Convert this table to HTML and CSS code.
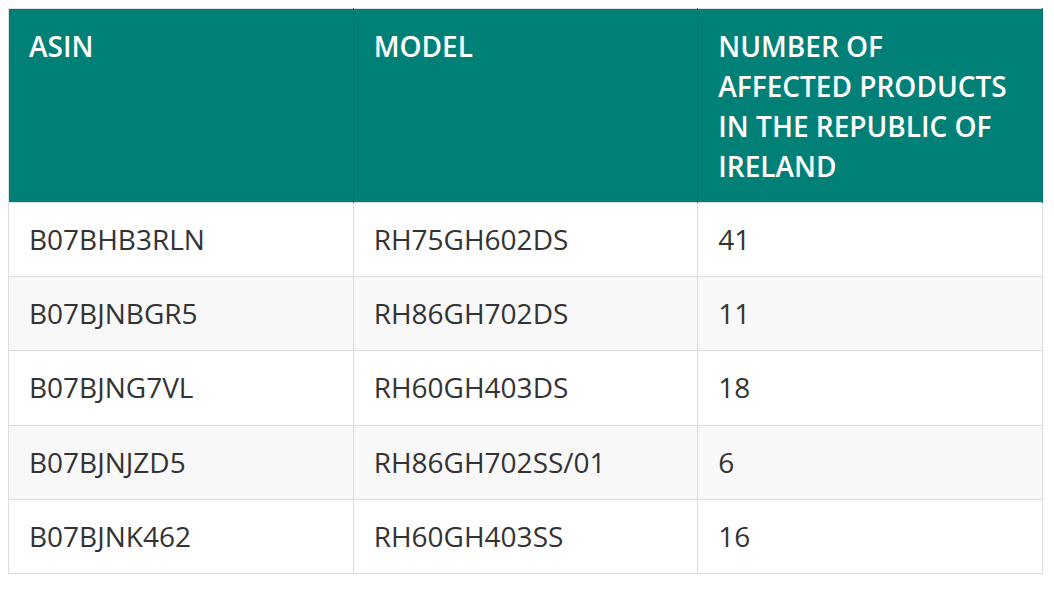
FILE: index.html
```html
<!DOCTYPE html>
<html lang="en">
<head>
<meta charset="utf-8">
<title>Affected products</title>
<link rel="stylesheet" href="styles.css">
</head>
<body>
<table class="recall-table">
  <thead>
    <tr>
      <th>ASIN</th>
      <th>MODEL</th>
      <th>NUMBER OF AFFECTED PRODUCTS IN THE REPUBLIC OF IRELAND</th>
    </tr>
  </thead>
  <tbody>
    <tr><td>B07BHB3RLN</td><td>RH75GH602DS</td><td>41</td></tr>
    <tr><td>B07BJNBGR5</td><td>RH86GH702DS</td><td>11</td></tr>
    <tr><td>B07BJNG7VL</td><td>RH60GH403DS</td><td>18</td></tr>
    <tr><td>B07BJNJZD5</td><td>RH86GH702SS/01</td><td>6</td></tr>
    <tr><td>B07BJNK462</td><td>RH60GH403SS</td><td>16</td></tr>
  </tbody>
</table>
</body>
</html>
```
FILE: styles.css
```css
html, body {
  margin: 0;
  background: #ffffff;
}
body {
  padding: 8px;
  font-family: "Open Sans", "Liberation Sans", sans-serif;
}
.recall-table {
  width: 1035px;
  border-collapse: collapse;
  table-layout: fixed;
  border: 1px solid #dddddd;
}
.recall-table th {
  background: #008077;
  color: #ffffff;
  font-weight: 600;
  font-size: 28px;
  line-height: 40px;
  text-align: left;
  vertical-align: top;
  padding: 17px 20px 16px;
  border-left: 1px solid #00766e;
  border-right: 1px solid #00766e;
  border-top: 1px solid #dddddd;
}
.recall-table th:first-child {
  border-left: 1px solid #dddddd;
}
.recall-table td {
  color: #333333;
  font-size: 28px;
  line-height: 1.4;
  padding: 17px 20px;
  border: 1px solid #dddddd;
  vertical-align: top;
}
.recall-table tbody tr:nth-child(even) td {
  background: #f8f8f8;
}
```
